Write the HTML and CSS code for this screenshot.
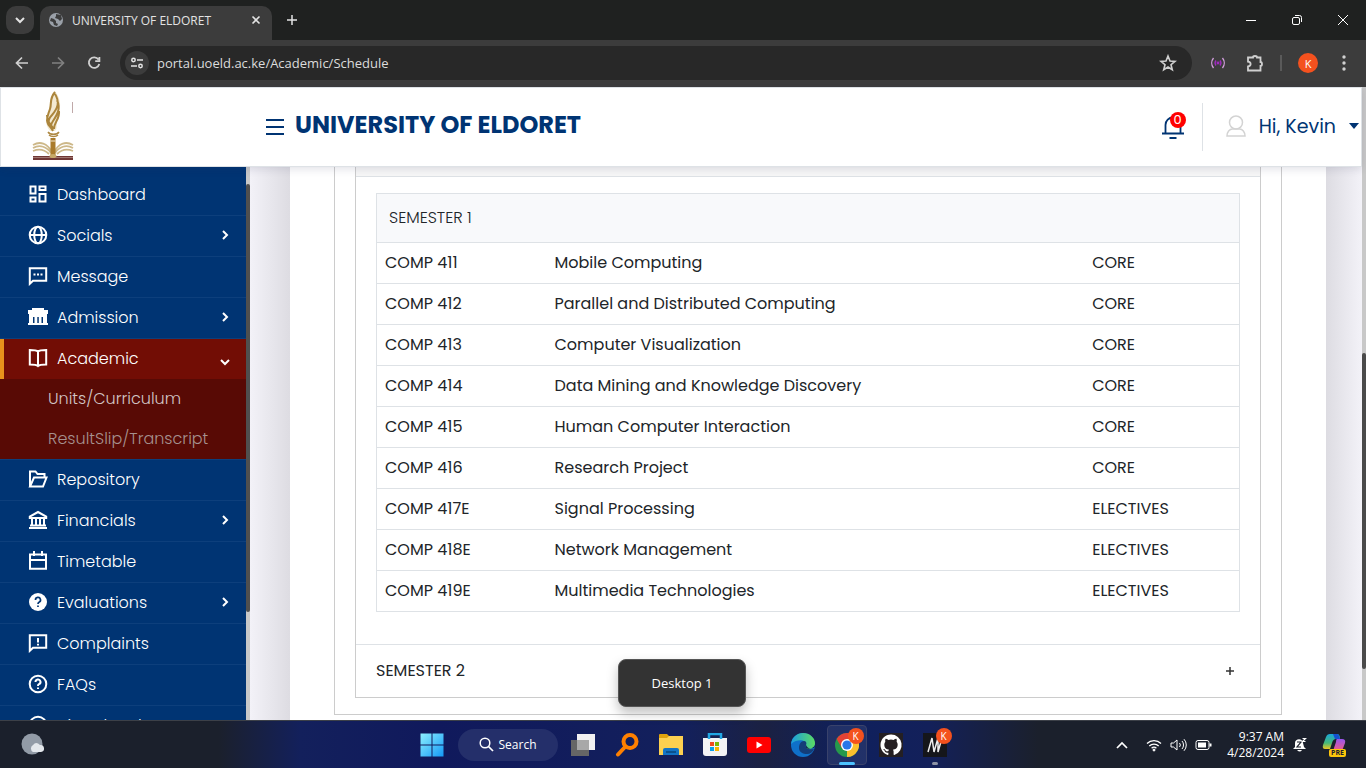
FILE: index.html
```html
<!DOCTYPE html>
<html lang="en">
<head>
<meta charset="utf-8">
<title>UNIVERSITY OF ELDORET</title>
<link rel="stylesheet" href="styles.css">
</head>
<body>
<div class="tabstrip">
  <button class="tab-search" aria-label="Search tabs"><svg width="12" height="12" viewBox="0 0 12 12" class="line"><path d="M2 4l4 4 4-4" stroke-width="2"/></svg></button>
  <div class="tab">
    <svg width="14" height="14" viewBox="0 0 14 14"><circle cx="7" cy="7" r="7" fill="#9aa0a8"/><path d="M2 5l3 1 2 2v2l2 1-1 2-3-1-1-3-3-1zM7 1l5 1 1 4-2 2-2-2-3-1 1-2z" fill="#3c3c3c"/></svg>
    <span class="tab-title">UNIVERSITY OF ELDORET</span>
    <button class="tab-close" aria-label="Close tab"><svg width="10" height="10" viewBox="0 0 10 10" class="line"><path d="M1.500 1.500l7 7M8.500 1.500l-7 7" stroke-width="1.600"/></svg></button>
  </div>
  <button class="tab-new" aria-label="New tab"><svg width="12" height="12" viewBox="0 0 12 12" class="line"><path d="M6 1v10M1 6h10" stroke-width="1.500"/></svg></button>
  <div class="window-buttons">
    <button aria-label="Minimize"><svg width="12" height="12" viewBox="0 0 12 12" class="line"><path d="M1 6.500h10"/></svg></button>
    <button aria-label="Restore"><svg width="12" height="12" viewBox="0 0 12 12" class="line"><rect x="1.500" y="3.500" width="7" height="7" rx="1.500"/><path d="M4 1.500h4.500a2 2 0 0 1 2 2V8"/></svg></button>
    <button aria-label="Close"><svg width="12" height="12" viewBox="0 0 12 12" class="line"><path d="M1 1l10 10M11 1L1 11"/></svg></button>
  </div>
</div>
<div class="toolbar">
  <button class="tool" aria-label="Back"><svg width="16" height="16" viewBox="0 0 16 16" class="line"><path d="M14 8H3M8 2.500L2.500 8 8 13.500" stroke-width="1.700"/></svg></button>
  <button class="tool dim" aria-label="Forward"><svg width="16" height="16" viewBox="0 0 16 16" class="line"><path d="M2 8h11M8 2.500L13.500 8 8 13.500" stroke-width="1.700"/></svg></button>
  <button class="tool" aria-label="Reload"><svg width="16" height="16" viewBox="0 0 16 16" class="line"><path d="M12.500 4.500A5.300 5.300 0 1 0 13.300 9M13.400 2v4.200H9.200" stroke-width="1.800"/></svg></button>
  <div class="address">
    <button class="site-info" aria-label="Site information"><svg width="14" height="12" viewBox="0 0 14 12" class="line"><circle cx="3.500" cy="3" r="1.700" stroke-width="1.500"/><circle cx="10.500" cy="9" r="1.700" stroke-width="1.500"/><path d="M7 3h6M1 9h6" stroke-width="1.600"/></svg></button>
    <input class="url" aria-label="Address" value="portal.uoeld.ac.ke/Academic/Schedule">
    <button class="star" aria-label="Bookmark"><svg width="18" height="18" viewBox="0 0 18 18" class="line"><path d="M9 2l2 5 5 .4-4 3.300 1.300 5L9 13l-4.300 2.700 1.300-5-4-3.300L7 7z" stroke-width="1.600"/></svg></button>
  </div>
  <div class="extensions">
    <button class="ext" aria-label="Recorder"><svg width="16" height="16" viewBox="0 0 16 16" fill="none" stroke="#a02bc0" stroke-width="1.300"><path d="M3.500 3a8 8 0 0 0 0 10M12.500 3a8 8 0 0 1 0 10" stroke="#d5a0df"/><path d="M6 5.500a4 4 0 0 0 0 5M10 5.500a4 4 0 0 1 0 5"/><circle cx="8" cy="8" r=".8" fill="#a02bc0"/></svg></button>
    <button class="ext" aria-label="Extensions"><svg width="18" height="18" viewBox="0 0 18 18" class="line"><path d="M2 3.500h5a2 1.500 0 0 1 4 0h3.500v4.500a1.500 2 0 0 1 0 4v4.500H2v-4c3.500-.3 3.500-4.500 0-4.800z" stroke-width="1.800"/></svg></button>
    <span class="tool-rule"></span>
    <button class="avatar" aria-label="Profile K">K</button>
    <button class="ext menu" aria-label="Menu"><svg width="4" height="16" viewBox="0 0 4 16" fill="#d0d0d0"><circle cx="2" cy="2" r="1.700"/><circle cx="2" cy="8" r="1.700"/><circle cx="2" cy="14" r="1.700"/></svg></button>
  </div>
</div>

<div class="viewport">
  <div class="app">
    <header class="header">
      <a href="#" class="logo" aria-label="University of Eldoret"><svg width="42" height="70" viewBox="0 0 42 70" fill="none">
        <path d="M23 0c7 9 6 18 2 27-1 6 1 10-2 13h-5c-5-6-5-13-1-22C18 11 18 5 23 0z" fill="#f3ead2"/>
        <path d="M23 1c-6 7-3 11-5 17s-3 7-3 12M23 3c5 8 3 14-3 21-3 3-4 7-3 10M25 9c4 9 0 15-4 21-2 3-3 5-1 8M27 20c1 8-5 11-5 18M15 30c1 5 4 6 6 10M15 24c0 6 3 9 7 14" stroke="#ab853c" stroke-width="2"/>
        <path d="M16 41c2 3 9 3 11 0M17 44c2 2 7 2 9 0" stroke="#ae8943" stroke-width="1.500"/>
        <path d="M1 54c7-4 14-2 19 7M1 57c7-4 14-1 18 5M1 60c7-3 12-1 16 3M41 54c-7-4-14-2-19 7M41 57c-7-4-14-1-18 5M41 60c-7-3-12-1-16 3" stroke="#cdb889" stroke-width="1.800"/>
        <path d="M1 65h40v4H1z" fill="#703735"/><path d="M1 66.500h40" stroke="#a07770"/>
        <path d="M18.500 47h5v18h-5z" fill="#a97b2c"/><path d="M18.500 50h5" stroke="#f3ead2"/><ellipse cx="21" cy="65" rx="3.500" ry="2" fill="#c7a968"/><path d="M40.500 11v11" stroke="#c0a9a9"/>
      </svg></a>
      <button class="hamburger" aria-label="Toggle menu"><svg width="20" height="18" viewBox="0 0 20 18" fill="#003473"><path d="M1 1h18v2H1zM1 8h18v2H1zM1 15h18v2H1z"/></svg></button>
      <h1 class="brand">UNIVERSITY OF ELDORET</h1>
      <div class="header-right">
        <button class="bell" aria-label="Notifications"><svg width="24" height="28" viewBox="0 0 24 28" fill="none" stroke="#003473" stroke-width="1.800"><path d="M4.500 21v-8a7.500 7.500 0 0 1 15 0v8M1 21.500h22"/><path d="M8.500 26h7" stroke-width="2"/></svg><span class="count">0</span></button>
        <button class="user"><svg width="20" height="22" viewBox="0 0 20 22" fill="none" stroke="#d3d3d3" stroke-width="1.500"><circle cx="10" cy="7.500" r="6.500"/><path d="M1 21c0-4 2.500-7 5.500-7h7c3 0 5.500 3 5.500 7z"/></svg><span>Hi, Kevin</span><svg width="10" height="6" viewBox="0 0 10 6"><path d="M0 0h10L5 6z" fill="#003473"/></svg></button>
      </div>
    </header>
    <div class="columns">
      <nav class="sidebar">
        <ul class="nav">
          <li><a href="#"><svg class="icon" viewBox="0 0 20 20"><path d="M2.500 2.500h5v7h-5zM11.500 2.500h6v3.500h-6zM2.500 13.500h5v4h-5zM11.500 10h6v7.500h-6z"/></svg>Dashboard</a></li>
          <li><a href="#"><svg class="icon" viewBox="0 0 20 20"><circle cx="10" cy="10" r="8.300"/><ellipse cx="10" cy="10" rx="3.800" ry="8.300"/><path d="M2 10h16"/></svg>Socials<svg class="chev" viewBox="0 0 10 10"><path d="M3 1l4 4-4 4"/></svg></a></li>
          <li><a href="#"><svg class="icon" viewBox="0 0 20 20"><path d="M1.800 2.200h16.400v12.600H5l-3.200 3z"/><path d="M5.500 8.500h2M9 8.500h2M12.500 8.500h2"/></svg>Message</a></li>
          <li><a href="#"><svg class="icon" viewBox="0 0 20 20"><path d="M4 1h12v2h4v4h-1v9h1v2H0v-2h1V7H0V3h4zM5 10v6h1.500v-6zM9.300 10v6h1.500v-6zM13.500 10v6H15v-6z" fill="#fff" stroke="none" fill-rule="evenodd"/></svg>Admission<svg class="chev" viewBox="0 0 10 10"><path d="M3 1l4 4-4 4"/></svg></a></li>
          <li class="open"><a href="#"><svg class="icon" viewBox="0 0 20 20"><path d="M10 18.500V3.500C8.500 2 6 2 1.800 2v14.500C6 16.500 8.500 16.500 10 18c1.500-1.500 4-1.500 8.200-1.500V2C14 2 11.500 2 10 3.500"/></svg>Academic<svg class="chev down" viewBox="0 0 10 10"><path d="M1 3l4 4 4-4"/></svg></a>
            <ul class="sub"><li><a href="#" class="current">Units/Curriculum</a></li><li><a href="#">ResultSlip/Transcript</a></li></ul>
          </li>
          <li><a href="#"><svg class="icon" viewBox="0 0 20 20"><path d="M2 17.500V2.500h5.500l2 2.500h7v3.500M2 17.500h13l3.500-9H6z"/></svg>Repository</a></li>
          <li><a href="#"><svg class="icon" viewBox="0 0 20 20"><path d="M1.800 8V6.500L10 2l8.200 4.500V8zM1 18h18M2 15.500h16M4 8v7M8 8v7M12 8v7M16 8v7"/></svg>Financials<svg class="chev" viewBox="0 0 10 10"><path d="M3 1l4 4-4 4"/></svg></a></li>
          <li><a href="#"><svg class="icon" viewBox="0 0 20 20"><path d="M2 3.500h16v14.300H2zM2 9h16M6 0v5M14 0v5"/></svg>Timetable</a></li>
          <li><a href="#"><svg class="icon" viewBox="0 0 20 20"><circle cx="10" cy="10" r="9" fill="#fff" stroke="none"/><path d="M7.500 8a2.500 2.500 0 1 1 3.500 2.200q-1 .5-1 1.800M10 13.500v1.500" stroke="#003473" stroke-width="1.700"/></svg>Evaluations<svg class="chev" viewBox="0 0 10 10"><path d="M3 1l4 4-4 4"/></svg></a></li>
          <li><a href="#"><svg class="icon" viewBox="0 0 20 20"><path d="M1.800 2.200h16.400v12.600H5l-3.200 3zM10 5v4.500M10 10.800v1.700"/></svg>Complaints</a></li>
          <li><a href="#"><svg class="icon" viewBox="0 0 20 20"><circle cx="10" cy="10" r="8.300"/><path d="M7.500 8a2.500 2.500 0 1 1 3.500 2.200q-1 .5-1 1.800M10 13.500v1.500"/></svg>FAQs</a></li>
          <li><a href="#"><svg class="icon" viewBox="0 0 20 20"><circle cx="10" cy="10" r="8.300"/></svg>Virtual tool</a></li>
        </ul>
        <div class="side-scroll"><span class="side-thumb"></span></div>
      </nav>
      <main class="content">
        <div class="sheet">
          <div class="panel">
            <div class="accordion">
              <div class="section-top"></div>
              <div class="section-body">
                <table class="units">
                  <colgroup><col class="c-code"><col class="c-name"><col class="c-kind"></colgroup>
                  <thead><tr><th colspan="3">SEMESTER 1</th></tr></thead>
                  <tbody>
                    <tr><td>COMP 411</td><td>Mobile Computing</td><td>CORE</td></tr>
                    <tr><td>COMP 412</td><td>Parallel and Distributed Computing</td><td>CORE</td></tr>
                    <tr><td>COMP 413</td><td>Computer Visualization</td><td>CORE</td></tr>
                    <tr><td>COMP 414</td><td>Data Mining and Knowledge Discovery</td><td>CORE</td></tr>
                    <tr><td>COMP 415</td><td>Human Computer Interaction</td><td>CORE</td></tr>
                    <tr><td>COMP 416</td><td>Research Project</td><td>CORE</td></tr>
                    <tr><td>COMP 417E</td><td>Signal Processing</td><td>ELECTIVES</td></tr>
                    <tr><td>COMP 418E</td><td>Network Management</td><td>ELECTIVES</td></tr>
                    <tr><td>COMP 419E</td><td>Multimedia Technologies</td><td>ELECTIVES</td></tr>
                  </tbody>
                </table>
              </div>
              <button class="section-toggle"><span>SEMESTER 2</span><svg width="8" height="8" viewBox="0 0 8 8"><path d="M4 0v8M0 4h8" stroke="#333" stroke-width="1.500"/></svg></button>
            </div>
          </div>
        </div>
      </main>
    </div>
  </div>
  <div class="page-scroll"><span class="page-thumb"></span></div>
</div>

<div class="taskbar">
  <button class="weather" aria-label="Weather"><svg width="24" height="24" viewBox="0 0 24 24"><circle cx="11" cy="11" r="10.500" fill="#929ba7"/><path d="M12 19a4 4 0 0 1 0-7q3-4 7 0a3.500 3.500 0 0 1 1 7z" fill="#e3e7ec"/></svg></button>
  <div class="tasks">
    <button class="task" aria-label="Start"><svg width="24" height="24" viewBox="0 0 24 24"><defs><linearGradient id="win" x1="0" y1="0" x2="1" y2="1"><stop stop-color="#8df0ff"/><stop offset="1" stop-color="#1498f5"/></linearGradient></defs><path d="M.5.500h11v11H.5zM12.500.500h11v11h-11zM.5 12.500h11v11H.5zM12.500 12.500h11v11h-11z" fill="url(#win)"/></svg></button>
    <button class="search"><svg width="15" height="15" viewBox="0 0 15 15" class="line"><circle cx="6" cy="6" r="4.800" stroke-width="1.500"/><path d="M9.500 9.500L14 14" stroke-width="1.700"/></svg><span>Search</span></button>
    <button class="task" aria-label="Task view"><svg width="24" height="24" viewBox="0 0 24 24"><path d="M6 1h18v16H6z" fill="#f1f1f2"/><path d="M0 7h18v16H0z" fill="#666"/><path d="M6 7h12v10H6z" fill="#a8a8a8"/></svg></button>
    <button class="task" aria-label="Everything"><svg width="24" height="24" viewBox="0 0 24 24" fill="none" stroke="#ff8000" stroke-linecap="round"><circle cx="15" cy="8.500" r="6.500" stroke-width="4"/><path d="M10 14l-7 7.500" stroke-width="4"/></svg></button>
    <button class="task" aria-label="File Explorer"><svg width="24" height="24" viewBox="0 0 24 24"><path d="M0 2q0-1 1-1h7l2 2v5H0z" fill="#dfa20d"/><path d="M0 5h8l2-2h14v19H0z" fill="#fcd050"/><path d="M4 22v-5q0-2 2-2h12q2 0 2 2v5z" fill="#1374c5"/><path d="M7 19h10" stroke="#0a518e" stroke-width="2"/></svg></button>
    <button class="task" aria-label="Store"><svg width="24" height="24" viewBox="0 0 24 24"><path d="M0 5h24v15q0 3-3 3H3q-3 0-3-3z" fill="#f3f3f5"/><path d="M6 6V1h12v5" fill="none" stroke="#22a7e5" stroke-width="2.500"/><path d="M7 9h4v4H7z" fill="#f04b20"/><path d="M12 9h4v4h-4z" fill="#79b807"/><path d="M7 14h4v4H7z" fill="#08a1ec"/><path d="M12 14h4v4h-4z" fill="#f9b500"/></svg></button>
    <button class="task" aria-label="YouTube"><svg width="24" height="24" viewBox="0 0 24 24"><rect y="4" width="24" height="16" rx="3" fill="#f00"/><path d="M9.500 8.500v7l6-3.500z" fill="#fff"/></svg></button>
    <button class="task" aria-label="Edge"><svg width="24" height="24" viewBox="0 0 24 24"><defs><linearGradient id="edge"><stop stop-color="#1b9de0"/><stop offset="1" stop-color="#5bdb62"/></linearGradient></defs><circle cx="12" cy="12" r="12" fill="#0f70c9"/><path d="M0 11C1 4 6 0 12 0c7 0 12 5 12 10 0 4-3 6-6 6-4 0-4-2-3-4 1-5-8-7-15-1z" fill="url(#edge)"/><path d="M8 15c0-4 2-7 5-7 2 0 3 2 2 4-1 3 1 5 8 4-1 3-4 5-7 5-4 0-8-2-8-6z" fill="#143d78"/><path d="M15 12c-1 3 1 5 8 3 1-1 1-2 1-3-2 4-7 5-9 0z" fill="#13224f"/></svg></button>
    <button class="task active" aria-label="Chrome"><svg width="24" height="24" viewBox="0 0 24 24"><circle cx="12" cy="12" r="12" fill="#26984b"/><path d="M12 12L12 24A12 12 0 0 0 22.400 6H12z" fill="#fbc02d"/><path d="M12 12v-6h10.400A12 12 0 0 0 1.600 6l5.200 9z" fill="#e34235"/><circle cx="12" cy="12" r="6" fill="#fff"/><circle cx="12" cy="12" r="4.600" fill="#2977e8"/></svg><span class="badge">K</span></button>
    <button class="task" aria-label="GitHub"><svg width="24" height="24" viewBox="0 0 24 24"><path d="M0 0h24v24H0z" fill="#241f22"/><g transform="translate(1.500 1.500) scale(1.310)"><path d="M8 0C3.580 0 0 3.580 0 8c0 3.540 2.290 6.530 5.470 7.590.4.070.55-.17.55-.38v-1.340c-2.230.48-2.700-1.070-2.700-1.070-.36-.92-.89-1.170-.89-1.170-.73-.5.050-.49.050-.49.810.060 1.230.83 1.230.83.720 1.230 1.870.88 2.330.67.070-.52.280-.88.510-1.080-1.780-.2-3.640-.89-3.640-3.950 0-.87.310-1.590.82-2.150-.08-.2-.36-1.020.08-2.120 0 0 .67-.21 2.200.82a7.600 7.600 0 0 1 4 0c1.530-1.030 2.200-.82 2.200-.82.440 1.100.16 1.920.08 2.120.51.560.82 1.280.82 2.150 0 3.070-1.870 3.750-3.650 3.950.29.250.54.730.54 1.480v2.200c0 .21.150.46.550.38A8 8 0 0 0 8 0z" fill="#fff"/></g></svg></button>
    <button class="task running" aria-label="M app"><svg width="24" height="24" viewBox="0 0 24 24"><path d="M0 0h24v24H0z" fill="#15161b"/><path d="M5 19L9 5l2 14 4-14 0 14 4-14" fill="none" stroke="#eee" stroke-width="1.500"/></svg><span class="badge">K</span></button>
  </div>
  <div class="tray">
    <button aria-label="Hidden icons"><svg width="12" height="8" viewBox="0 0 12 8" class="line"><path d="M1 7l5-5 5 5" stroke-width="1.700"/></svg></button>
    <button class="quick" aria-label="Network, volume and battery">
      <svg width="16" height="14" viewBox="0 0 16 14" class="line"><path d="M1 5.500a10 10 0 0 1 14 0M3.300 8a6.700 6.700 0 0 1 9.400 0M5.600 10.300a3.500 3.500 0 0 1 4.800 0" stroke-width="1.300"/><circle cx="8" cy="12" r="1" fill="#fff"/></svg>
      <svg width="17" height="14" viewBox="0 0 17 14" class="line"><path d="M1 5h2.500L7 2v10L3.500 9H1zM9.500 5a3 3 0 0 1 0 4M12 3a6 6 0 0 1 0 8M14 1.200a8.500 8.500 0 0 1 0 11.600"/></svg>
      <svg width="17" height="12" viewBox="0 0 17 12" class="line"><rect x="1" y="1.500" width="13" height="9" rx="2"/><path d="M15.500 4.500v3" stroke-width="2"/><path d="M3 3.500h8v5H3z" fill="#fff" stroke="none"/></svg>
    </button>
    <button class="clock"><span>9:37 AM</span><span>4/28/2024</span></button>
    <button aria-label="Do not disturb"><svg width="16" height="16" viewBox="0 0 16 16"><path d="M1 12l2-2V6c0-5 8-5 8 0l1 4 2 2zM5 13h5q-2 3-5 0z" fill="#fff"/><path d="M5 5h4L5 10h4" fill="none" stroke="#1b202c" stroke-width="1.200"/><path d="M10.500 1.500h3l-3 3h3" fill="none" stroke="#fff" stroke-width="1.200"/></svg></button>
    <button class="copilot" aria-label="Copilot"><svg width="24" height="24" viewBox="0 0 24 24"><defs><linearGradient id="copA" x2="0" y2="1"><stop stop-color="#1ba7d8"/><stop offset=".6" stop-color="#45b878"/><stop offset="1" stop-color="#edc522"/></linearGradient><linearGradient id="copB" x2="0" y2="1"><stop stop-color="#9855ee"/><stop offset="1" stop-color="#f35d81"/></linearGradient></defs><path d="M8 1h7q3 0 3 5h-4q-3 0-4 4l-2 6H3q-3 0-2-4L4 4q1-3 4-3z" fill="url(#copA)"/><path d="M11 1h4q2 0 3 5h-5z" fill="#1551cf"/><path d="M15 6h5q4 0 3 4l-3 8h-9l3-9q0-3 1-3z" fill="url(#copB)"/></svg><span class="pre">PRE</span></button>
  </div>
  <div class="tip" role="tooltip">Desktop 1</div>
</div>
</body>
</html>
```
FILE: styles.css
```css
* { box-sizing: border-box; }
html, body { height: 100%; margin: 0; }
body {
  display: flex;
  flex-direction: column;
  overflow: hidden;
  font-family: "Open Sans", "Noto Sans", sans-serif;
  font-size: 12px;
  color: #fff;
}
button {
  display: flex;
  align-items: center;
  justify-content: center;
  margin: 0;
  padding: 0;
  border: 0;
  background: none;
  color: inherit;
  font: inherit;
}
a { color: inherit; text-decoration: none; }
ul { list-style: none; margin: 0; padding: 0; }
svg { flex: none; }
.line { fill: none; stroke: currentColor; }

/* Browser tabs */
.tabstrip { display: flex; flex: none; height: 40px; background: #1f2120; color: #e3e3e3; }
.tab-search { width: 28px; height: 28px; margin: 6px 6px 0; border-radius: 10px; background: #3c3c3c; }
.tab {
  display: flex;
  align-items: center;
  width: 232px;
  margin-top: 6px;
  padding: 0 10px 6px 9px;
  border-radius: 10px 10px 0 0;
  background: #3c3c3c;
}
.tab-title { flex: 1; margin-left: 9px; white-space: nowrap; }
.tab-close { width: 12px; height: 12px; }
.tab-new { width: 40px; }
.window-buttons { display: flex; margin-left: auto; color: #fff; }
.window-buttons button { width: 46px; }

/* Browser toolbar */
.toolbar { display: flex; flex: none; align-items: center; height: 47px; padding: 0 0 1px 4px; background: #3c3c3c; color: #d0d0d0; }
.tool { width: 36px; height: 34px; }
.dim { color: #808080; }
.address { display: flex; flex: 1; align-items: center; height: 34px; margin-left: 8px; padding: 0 15px 0 5px; border-radius: 17px; background: #282828; }
.site-info { width: 24px; height: 24px; border-radius: 12px; background: #3c3c3c; color: #e3e3e3; }
.url { flex: 1; min-width: 0; margin-left: 8px; padding: 0; border: 0; outline: 0; background: none; color: #dcdcdc; font: inherit; font-size: 13px; }
.extensions { display: flex; align-items: center; padding: 0 16px 0 10px; }
.ext { width: 32px; height: 32px; margin-right: 5px; }
.tool-rule { width: 2px; height: 16px; margin: 0 16px 0 4px; background: #5a5a5a; }
.avatar { width: 20px; height: 20px; border-radius: 10px; background: #f4511e; color: #fff; font-size: 11px; }
.ext.menu { width: 12px; margin: 0 0 0 20px; }

/* Page */
.viewport { display: flex; flex: 1; min-height: 0; font-family: Poppins, Inter, sans-serif; font-size: 16px; }
.app { display: flex; flex: 1; flex-direction: column; min-width: 0; background: #f2f1f7; }
.page-scroll { width: 4px; padding-top: 266px; background: #c8c8c8; }
.page-thumb { display: block; height: 316px; border-radius: 2px; background: #4a4a4a; }

.header {
  position: relative;
  display: flex;
  flex: none;
  align-items: center;
  height: 80px;
  border: 1px solid #dee2e6;
  background: #fff;
  color: #003473;
  box-shadow: 0 2px 8px rgba(40, 40, 80, .14);
}
.logo { width: 264px; padding: 0 0 2px 31px; line-height: 0; }
.hamburger { width: 20px; height: 20px; }
.brand { flex: 1; margin: 0 0 5px 10px; font-size: 24px; font-weight: 700; }
.header-right { display: flex; align-items: center; }
.bell { position: relative; width: 24px; height: 28px; margin: 0 17px 2px 0; }
.count {
  position: absolute;
  top: 0;
  right: -1px;
  width: 16px;
  height: 16px;
  border-radius: 8px;
  background: #f00;
  color: #fff;
  font-size: 13px;
  line-height: 16px;
}
.user { height: 48px; gap: 13px; padding: 0 2px 2px 23px; border-left: 1px solid #dee2e6; font-size: 19px; font-weight: 400; }

.columns { display: flex; flex: 1; min-height: 0; }
.sidebar { display: flex; flex: none; width: 250px; overflow: hidden; background: #003473; color: #fff; font-weight: 300; }
.nav { flex: 1; padding-top: 8px; }
.nav > li { border-bottom: 1px solid #0d3f7c; }
.nav > li > a { display: flex; align-items: center; height: 40px; padding: 0 16px 2px 28px; }
.icon { width: 20px; height: 20px; margin-right: 9px; fill: none; stroke: #fff; stroke-width: 2; }
.chev { width: 10px; height: 10px; margin-left: auto; fill: none; stroke: #fff; stroke-width: 2; }
.down { margin-top: 8px; }
.nav > .open > a { padding-left: 24px; border-left: 4px solid #e8921c; background: #720d05; }
.sub { background: #580a05; }
.sub a { display: block; padding-left: 48px; line-height: 40px; color: #a6918f; }
.sub .current { color: #d2c5c4; }
.side-scroll { width: 4px; padding-top: 17px; background: #c8c8c8; }
.side-thumb { display: block; height: 428px; border-radius: 2px; background: #4f4f4f; }

.content {
  flex: 1;
  min-width: 0;
  overflow: hidden;
  padding: 0 36px 0 40px;
  background: linear-gradient(90deg, #f3f2f8, #dddce2 40px, #dddce2 calc(100% - 36px), #f3f2f8);
}
.sheet { min-height: 100%; padding: 0 44px; background: #fff; }
.panel { padding: 0 20px 16px; border: 1px solid #ccc; border-top: 0; }
.accordion { border: 1px solid #ccc; border-top: 0; color: #212529; }
.section-top { height: 10px; border-bottom: 1px solid #dee2e6; background: #f7f7f7; }
.section-body { padding: 16px 20px 32px; border-bottom: 1px solid #dee2e6; }
.units { width: 100%; border-collapse: collapse; table-layout: fixed; border: 1px solid #dee2e6; }
.c-code { width: 170px; }
.c-kind { width: 18%; }
.units th { height: 49px; padding: 0 12px 2px; background: #f8f9fb; font-weight: 300; text-align: left; }
.units td { height: 41px; padding: 0 8px 2px; border-top: 1px solid #dee2e6; }
.section-toggle { width: 100%; height: 52px; justify-content: space-between; padding: 0 26px 0 20px; }
.section-toggle span { padding-bottom: 2px; }

/* Taskbar */
.taskbar {
  position: relative;
  display: grid;
  grid-template-columns: 1fr auto 1fr;
  flex: none;
  align-items: center;
  height: 48px;
  border-top: 1px solid #3c4048;
  background: linear-gradient(90deg, #1b202c 0, #1b202c 16%, #13205c 22%, #10195c 32%, #13205c 50%, #1b2142 56%, #0f205d 62%, #13205a 68%, #1b202c 76%);
}
.weather { justify-self: start; width: 24px; height: 24px; margin-left: 21px; }
.tasks { display: flex; align-items: center; }
.task { position: relative; width: 44px; height: 40px; }
.search { width: 100px; height: 32px; gap: 5px; margin: 0 3px 0 4px; border-radius: 16px; background: #242f6a; }
.active::before { content: ""; position: absolute; inset: 0 2px; border: 1px solid #39426b; border-radius: 4px; background: rgba(255, 255, 255, .08); }
.active svg { position: relative; }
.active::after, .running::after { content: ""; position: absolute; bottom: 0; left: 50%; width: 16px; height: 3px; margin-left: -8px; border-radius: 2px; background: #4cc2ff; }
.running::after { width: 6px; margin-left: -3px; background: #8d93a5; }
.badge { position: absolute; top: 3px; right: 5px; width: 16px; height: 16px; border-radius: 8px; background: #f4511e; font-size: 10px; line-height: 16px; }
.tray { display: flex; justify-self: end; align-items: center; padding-right: 20px; }
.quick { gap: 8px; margin: 0 15px 0 18px; }
.clock { flex-direction: column; align-items: flex-end; margin-right: 8px; line-height: 16px; }
.copilot { position: relative; margin-left: 14px; }
.pre { position: absolute; right: 0; bottom: 0; padding: 0 2px; border-radius: 2px; background: #fdc60b; color: #1b202c; font-size: 7px; font-weight: 700; line-height: 8px; }
.tip {
  position: absolute;
  bottom: 61px;
  left: 50%;
  width: 128px;
  margin-left: -65px;
  border: 1px solid #555;
  border-radius: 8px;
  background: #333;
  font-size: 13px;
  line-height: 46px;
  text-align: center;
  box-shadow: 0 6px 12px rgba(0, 0, 0, .25);
}
```
